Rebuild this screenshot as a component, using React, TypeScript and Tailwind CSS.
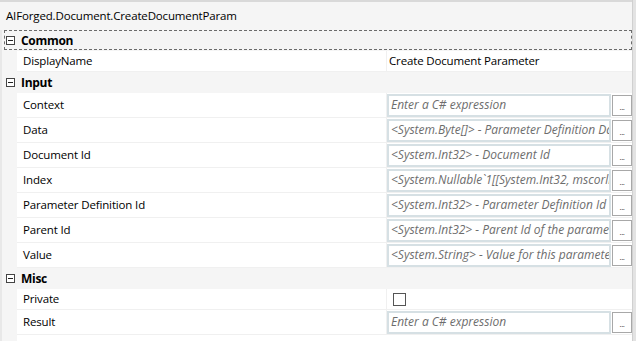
import React from 'react';

type Row =
    | { kind: 'category'; name: string; focused?: boolean }
    | { kind: 'text'; label: string; value: string }
    | { kind: 'editor'; label: string; hint: string }
    | { kind: 'check'; label: string };

const rows: Row[] = [
    { kind: 'category', name: 'Common', focused: true },
    { kind: 'text', label: 'DisplayName', value: 'Create Document Parameter' },
    { kind: 'category', name: 'Input' },
    { kind: 'editor', label: 'Context', hint: 'Enter a C# expression' },
    { kind: 'editor', label: 'Data', hint: '<System.Byte[]> - Parameter Definition Data' },
    { kind: 'editor', label: 'Document Id', hint: '<System.Int32> - Document Id' },
    { kind: 'editor', label: 'Index', hint: '<System.Nullable`1[[System.Int32, mscorlib]]> - Index' },
    { kind: 'editor', label: 'Parameter Definition Id', hint: '<System.Int32> - Parameter Definition Id' },
    { kind: 'editor', label: 'Parent Id', hint: '<System.Int32> - Parent Id of the parameter' },
    { kind: 'editor', label: 'Value', hint: '<System.String> - Value for this parameter' },
    { kind: 'category', name: 'Misc' },
    { kind: 'check', label: 'Private' },
    { kind: 'editor', label: 'Result', hint: 'Enter a C# expression' },
];

function CollapseBox() {
    return (
        <span className="w-[9px] h-[9px] border border-[#444] bg-white flex items-center justify-center">
            <span className="w-[5px] h-px bg-[#222]" />
        </span>
    );
}

function CategoryRow({ name, focused }: { name: string; focused?: boolean }) {
    return (
        <div className="h-[21px] flex items-center relative bg-[#f5f5f5]">
            {focused && (
                <div className="absolute left-[2px] right-0 top-0 bottom-px border border-dashed border-[#6b6b6b]" />
            )}
            <div className="w-[19px] pl-[4px] flex items-center">
                <CollapseBox />
            </div>
            <span className="font-bold text-[12px] tracking-[-0.3px] text-black">{name}</span>
        </div>
    );
}

function PropRow({ label, height, children }: { label: string; height: string; children: React.ReactNode }) {
    return (
        <div className={`${height} flex bg-[#f5f5f5]`}>
            <div className="w-[15px]" />
            <div className="flex-1 flex bg-white border-b border-[#f0f0f0]">
                <div className="w-[370px] pl-[6px] flex items-center border-r border-[#f0f0f0] text-black">
                    {label}
                </div>
                <div className="flex-1 flex items-center">{children}</div>
            </div>
        </div>
    );
}

function Editor({ hint }: { hint: string }) {
    return (
        <div className="flex items-center w-full">
            <div className="w-[224px] h-[23px] border-2 border-[#d6e0e4] bg-white flex items-center pl-[2px] overflow-hidden whitespace-nowrap">
                <span className="italic text-[12px] tracking-normal text-[#6d6d6d]">{hint}</span>
            </div>
            <button className="ml-px w-[20px] h-[21px] border border-[#a8a8a8] bg-white flex items-end justify-center pb-[4px] text-[8px] tracking-[-0.5px] leading-none text-[#333]">
                ...
            </button>
        </div>
    );
}

export default function App() {
    return (
        <div
            className="w-[636px] h-[341px] bg-white flex overflow-hidden text-[11.5px] tracking-[-0.15px]"
            style={{ fontFamily: '"Segoe UI", "Open Sans", "Noto Sans", sans-serif' }}
        >
            <div className="flex-1 flex flex-col border-t-2 border-[#d9d9d9]">
                <div className="h-[28px] bg-[#f5f5f5] flex items-center pl-[6px] text-black">
                    AIForged.Document.CreateDocumentParam
                </div>
                <div className="flex-1 flex flex-col border-l-2 border-[#e8e8e8] bg-[#f5f5f5]">
                    {rows.map((row, i) => {
                        if (row.kind === 'category') {
                            return <CategoryRow key={i} name={row.name} focused={row.focused} />;
                        }
                        if (row.kind === 'text') {
                            return (
                                <PropRow key={i} label={row.label} height="h-[21px]">
                                    <span className="pl-[2px] text-black">{row.value}</span>
                                </PropRow>
                            );
                        }
                        if (row.kind === 'check') {
                            return (
                                <PropRow key={i} label={row.label} height="h-[21px]">
                                    <span className="ml-[6px] w-[13px] h-[13px] border border-[#555] bg-white" />
                                </PropRow>
                            );
                        }
                        return (
                            <PropRow key={i} label={row.label} height="h-[25px]">
                                <Editor hint={row.hint} />
                            </PropRow>
                        );
                    })}
                    <div className="flex-1 flex">
                        <div className="w-[15px]" />
                        <div className="flex-1 bg-white" />
                    </div>
                </div>
            </div>
            <div className="w-[4px] bg-[#e3e3e3] border-l border-[#d0d0d0]" />
        </div>
    );
}
